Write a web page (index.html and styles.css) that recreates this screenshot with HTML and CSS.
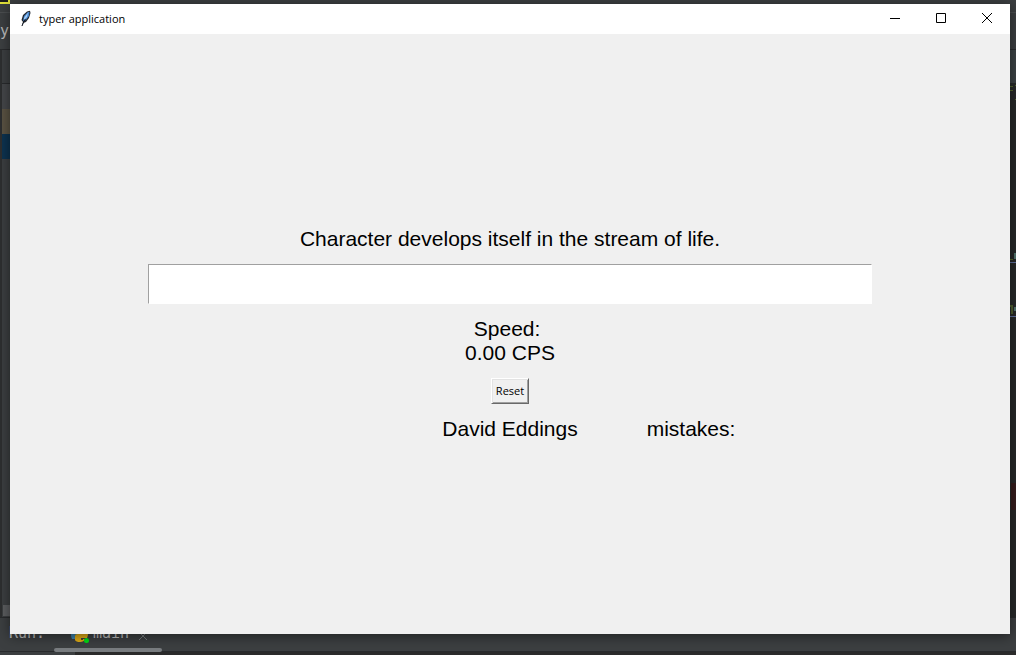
FILE: index.html
```html
<!DOCTYPE html>
<html lang="en">
<head>
<meta charset="utf-8">
<title>typer application</title>
<link rel="stylesheet" href="styles.css">
</head>
<body>
<div class="ide" aria-hidden="true">
  <div class="ide-focus"></div>
  <div class="ide-menu"></div>
  <div class="ide-nav">y</div>
  <div class="ide-main">
    <div class="ide-tree">
      <div class="tree-head"></div>
      <div class="tree-gap"></div>
      <div class="tree-row tree-brown"></div>
      <div class="tree-row tree-selected"></div>
      <div class="tree-fill"></div>
      <div class="tree-scroll"></div>
    </div>
    <div class="ide-editor">
      <div class="editor-tabs"></div>
      <svg class="editor-code" width="6" height="508" viewBox="0 0 6 508">
        <path d="M0 3.5h3M0 7.5h3M5 2.5h1M5 16.5h1M0 176.5h3" stroke="#56692e"/>
        <path d="M5 170v6M5 226v2M5 224v4" stroke="#52756e" stroke-width="2"/>
        <path d="M0 179.5h6M0 233.5h6" stroke="#6072a0"/>
        <path d="M0 223h2v8" stroke="#506030" stroke-width="2" fill="none"/>
        <path d="M1 400h5v27h-5z" fill="#351d1d"/>
      </svg>
    </div>
  </div>
  <div class="ide-run">
    <span class="run-label">Run:</span>
    <svg class="run-icon" width="20" height="18" viewBox="0 0 20 18">
      <path d="M2 5h7v5H5v4H2q-2-4 0-9z" fill="#3b82aa"/>
      <path d="M5 11q0-2 3-2h7V5h2q2 4 0 8h-6v1h4q-1 3-5 3t-5-2z" fill="#e0ac16"/>
      <path d="M11 14.500h2" stroke="#5d4a12"/>
      <circle cx="16.500" cy="15.500" r="2.500" fill="#00e016"/>
    </svg>
    <span class="run-name">main</span>
    <svg class="run-close" width="10" height="10" viewBox="0 0 10 10"><path d="M1 1l8 8M9 1L1 9" stroke="#74797b" fill="none"/></svg>
    <div class="run-thumb"></div>
  </div>
  <div class="ide-foot"><div class="foot-left"></div></div>
</div>

<main class="window">
  <header class="titlebar">
    <svg class="feather" width="12" height="18" viewBox="0 0 12 18">
      <path d="M1.500 16.500L3 12 1.500 10 3 5 7 1.500 10 .800 10.500 3 9 8 6 12 3.500 13z" fill="#22252c"/>
      <path d="M3 11L4 6 8 2 9.500 2 9 6 6 10z" fill="#4586cf"/>
      <path d="M4 8L8 2.500 7 7 4 10z" fill="#a6cdf5"/>
      <path d="M5.500 9L4 11 2 16" stroke="#111722" fill="none"/>
    </svg>
    <h1 class="title">typer application</h1>
    <button class="caption" type="button" aria-label="Minimize"><svg width="10" height="10" viewBox="0 0 10 10"><path d="M0 5.500h10" stroke="#000"/></svg></button>
    <button class="caption" type="button" aria-label="Maximize"><svg width="10" height="10" viewBox="0 0 10 10"><path d="M.5 .5h9v9h-9z" stroke="#000" fill="none"/></svg></button>
    <button class="caption" type="button" aria-label="Close"><svg width="10" height="10" viewBox="0 0 10 10"><path d="M0 0l10 10M10 0L0 10" stroke="#000"/></svg></button>
  </header>
  <form class="typer">
    <label class="sentence" for="entry">Character develops itself in the stream of life.</label>
    <input class="entry" id="entry" type="text" autocomplete="off">
    <output class="speed" for="entry"><span class="speed-line">Speed: </span><span class="speed-line">0.00 CPS</span></output>
    <button class="reset" type="reset">Reset</button>
    <div class="details">
      <span class="author">David Eddings</span>
      <span class="mistakes">mistakes:</span>
    </div>
  </form>
</main>
</body>
</html>
```

FILE: styles.css
```css
* { box-sizing: border-box; }
html, body { height: 100%; }
body {
  margin: 0;
  overflow: hidden;
  position: relative;
  background: #2b2b2b;
  font-family: "Liberation Sans", Arial, sans-serif;
  color: #000;
}

/* editor behind the window */
.ide {
  height: 100%;
  display: flex;
  flex-direction: column;
  position: relative;
  overflow: hidden;
  background: #3c3f41;
  color: #bbb;
  font-family: "DejaVu Sans Mono", monospace;
  font-size: 15px;
}
.ide-focus {
  position: absolute;
  top: -8px;
  left: -8px;
  width: 18px;
  height: 12px;
  border: 2px solid #e0e03a;
  background: #1c1c1c;
}
.ide-menu { height: 13px; border-bottom: 1px solid #4b4e50; }
.ide-nav {
  height: 37px;
  line-height: 37px;
  border-bottom: 1px solid #292b2d;
}
.ide-main { flex: 1; display: flex; justify-content: space-between; min-height: 0; }
.ide-tree {
  width: 12px;
  display: flex;
  flex-direction: column;
  border-left: 2px solid #2d2f30;
}
.tree-head { height: 34px; border-bottom: 1px solid #292b2d; }
.tree-gap { height: 25px; background: #45474a; }
.tree-row { height: 25px; }
.tree-brown { background: #5a5343; }
.tree-selected { background: #0d3350; }
.tree-fill { flex: 1; }
.tree-scroll { height: 11px; margin: 0 0 1px 1px; background: #5c5e60; }
.ide-editor { width: 6px; background: #272a2a; }
.editor-tabs { height: 33px; background: #3c4245; }
.editor-code { display: block; }
.ide-run {
  height: 34px;
  position: relative;
  display: flex;
  align-items: center;
  padding: 0 9px 4px;
  border-top: 1px solid #292b2d;
}
.run-label { width: 61px; }
.run-icon { margin-top: 3px; }
.run-name { margin: 0 9px 0 3px; }
.run-close { margin-top: 6px; }
.run-thumb {
  position: absolute;
  left: 54px;
  bottom: -1px;
  width: 108px;
  height: 4px;
  border-radius: 2px;
  background: #797d80;
}
.ide-foot { height: 4px; background: #2b2b2b; border-top: 1px solid #292b2d; }
.foot-left { width: 75px; height: 3px; background: #3c3f41; }

/* application window */
.window {
  position: absolute;
  inset: 4px 6px 21px 10px;
  display: flex;
  flex-direction: column;
  background: #f0f0f0;
  box-shadow: 0 2px 12px rgba(0, 0, 0, 0.5);
}
.titlebar {
  height: 30px;
  display: flex;
  align-items: center;
  padding-left: 10px;
  background: #fff;
}
.feather { margin-right: 7px; }
.title {
  flex: 1;
  margin: 0;
  font: 400 11px/16px "Open Sans", "Noto Sans", sans-serif;
}
.caption {
  width: 46px;
  height: 30px;
  display: grid;
  place-items: center;
  padding: 0 0 2px;
  border: 0;
  background: none;
}
.typer {
  flex: 1;
  display: flex;
  flex-direction: column;
  align-items: center;
  justify-content: center;
  gap: 13px;
  font-size: 21px;
  line-height: 24px;
}
.entry {
  width: 72.4%;
  height: 40px;
  padding: 0 4px;
  border: 1px solid #fff;
  border-top-color: #a0a0a0;
  border-left-color: #a0a0a0;
  outline: 0;
  background: #fff;
  font: inherit;
}
.speed { display: flex; flex-direction: column; align-items: center; }
.speed-line { white-space: pre; }
.reset {
  height: 26px;
  padding: 0 4px;
  border: 1px solid;
  border-color: #fff #696969 #696969 #fff;
  background: #f0f0f0;
  box-shadow: inset 1px 1px #e3e3e3, inset -1px -1px #a0a0a0;
  font: 400 11px/16px "Open Sans", "Noto Sans", sans-serif;
}
.details {
  width: 54.3%;
  display: grid;
  grid-template-columns: repeat(3, 1fr);
  text-align: center;
}
.author { grid-column: 2; }
```
